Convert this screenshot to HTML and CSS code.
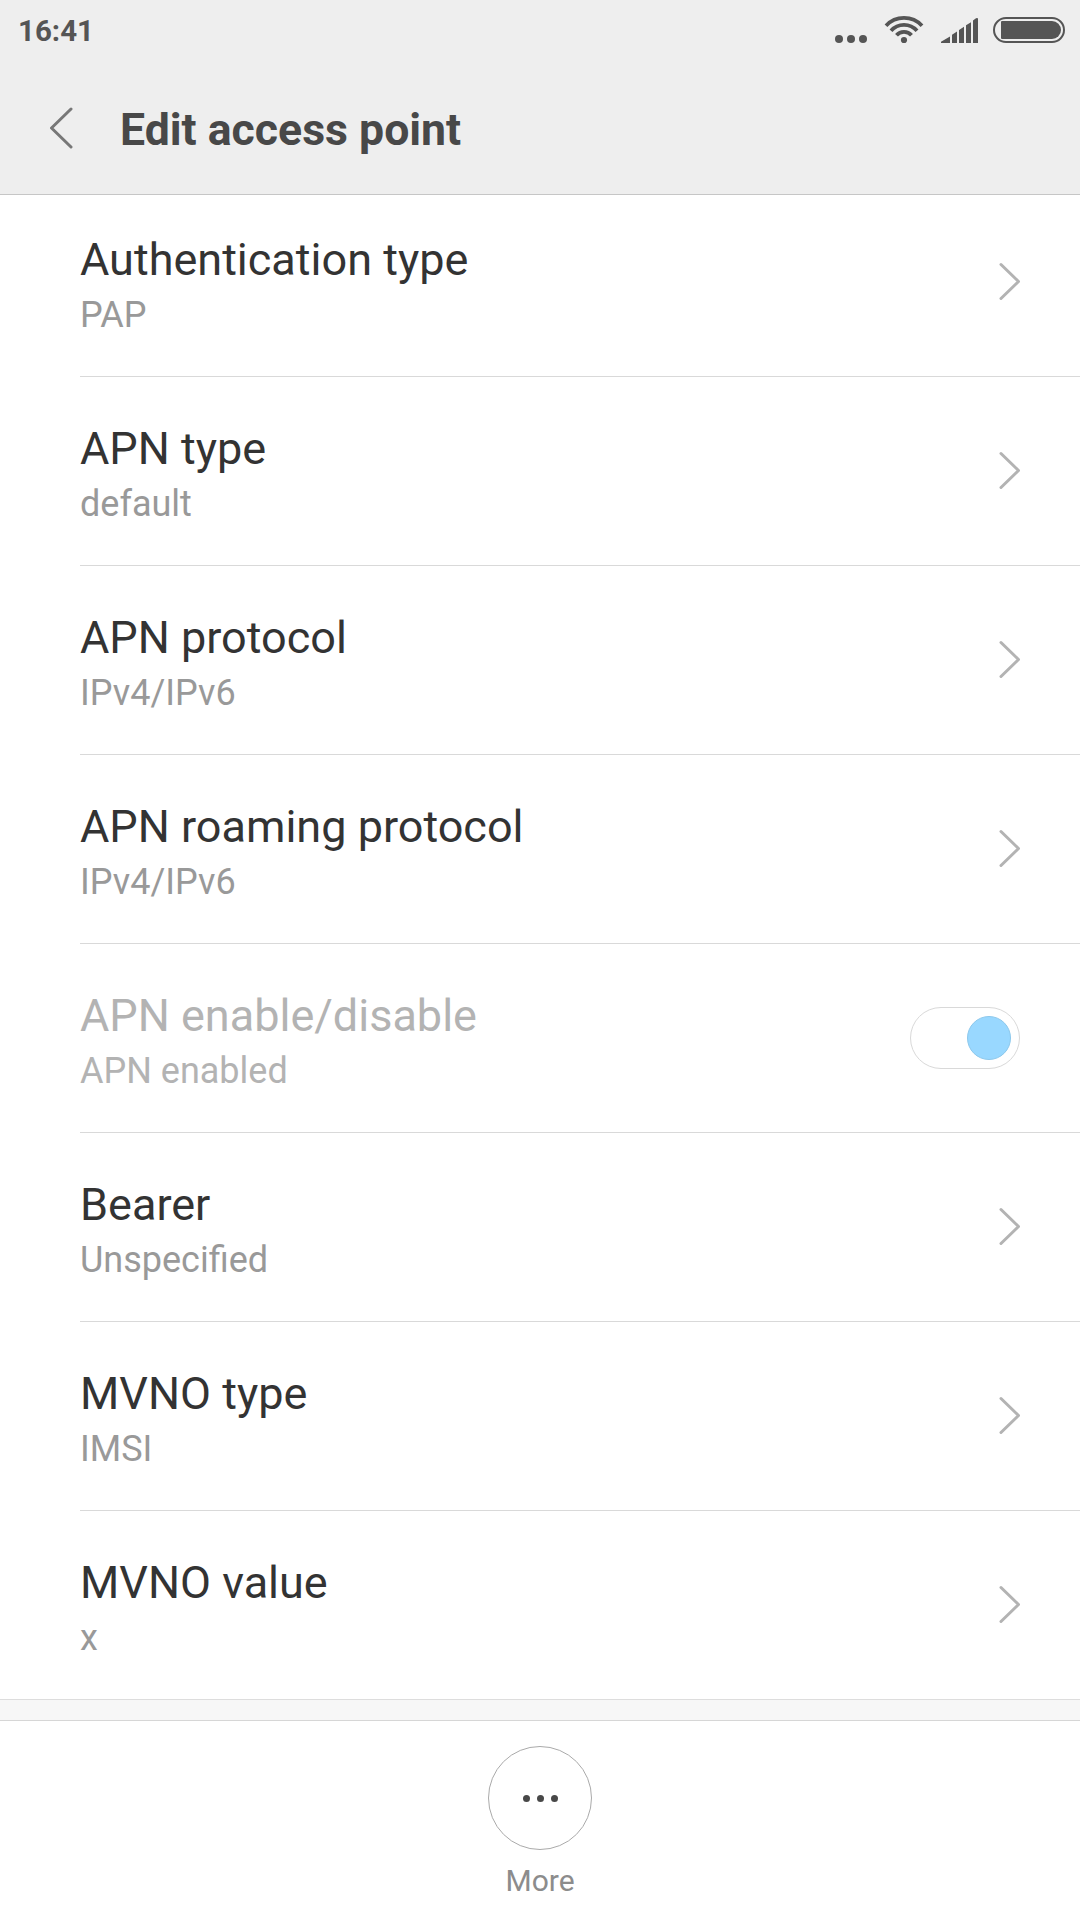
FILE: index.html
```
<!DOCTYPE html>
<html lang="en"><head><meta charset="utf-8"><title>Edit access point</title><link rel="stylesheet" href="styles.css"></head>
<body>
<header class="header">
<div class="status"><span class="time">16:41</span>
<svg class="status-icons" width="250" height="60" viewBox="830 0 250 60" fill="#555"><circle cx="839" cy="39" r="4"/><circle cx="851" cy="39" r="4"/><circle cx="863" cy="39" r="4"/><g fill="none" stroke="#555" stroke-width="3.8"><path d="M886 25.7A24.7 24.7 0 0 1 922 25.7M891 30.7A17.3 17.3 0 0 1 917 30.7M896.5 35.3A10 10 0 0 1 911.5 35.3"/></g><circle cx="904" cy="40" r="3.1"/><path d="M941 43V41.8L950 36.5V43ZM952 43V34.7L957 31.5V43ZM959 43V30L964 26.8V43ZM966 43V25.3L971 22.2V43ZM973 43V20.5L976 18.3Q978 17.5 978 19V43Z"/><rect x="994" y="18" width="70" height="24" rx="12" fill="none" stroke="#555" stroke-width="2"/><path d="M1002 21H1052A9 9 0 0 1 1052 39H1002Q1001 39 1001 38V22Q1001 21 1002 21Z"/></svg></div>
<div class="titlebar"><svg class="back" width="26" height="42" viewBox="0 0 26 42"><path d="M23 2L3.5 21L23 40"/></svg><h1>Edit access point</h1></div>
</header>
<main class="list">
<div class="row"><div class="text"><div class="name">Authentication type</div><div class="value">PAP</div></div><svg class="chev" width="24" height="40" viewBox="0 0 24 40"><path d="M5 2.5L22.5 19.5L5 36.5"/></svg></div>
<div class="row"><div class="text"><div class="name">APN type</div><div class="value">default</div></div><svg class="chev" width="24" height="40" viewBox="0 0 24 40"><path d="M5 2.5L22.5 19.5L5 36.5"/></svg></div>
<div class="row"><div class="text"><div class="name">APN protocol</div><div class="value">IPv4/IPv6</div></div><svg class="chev" width="24" height="40" viewBox="0 0 24 40"><path d="M5 2.5L22.5 19.5L5 36.5"/></svg></div>
<div class="row"><div class="text"><div class="name">APN roaming protocol</div><div class="value">IPv4/IPv6</div></div><svg class="chev" width="24" height="40" viewBox="0 0 24 40"><path d="M5 2.5L22.5 19.5L5 36.5"/></svg></div>
<div class="row disabled"><div class="text"><div class="name">APN enable/disable</div><div class="value">APN enabled</div></div><div class="switch"><div class="knob"></div></div></div>
<div class="row"><div class="text"><div class="name">Bearer</div><div class="value">Unspecified</div></div><svg class="chev" width="24" height="40" viewBox="0 0 24 40"><path d="M5 2.5L22.5 19.5L5 36.5"/></svg></div>
<div class="row"><div class="text"><div class="name">MVNO type</div><div class="value">IMSI</div></div><svg class="chev" width="24" height="40" viewBox="0 0 24 40"><path d="M5 2.5L22.5 19.5L5 36.5"/></svg></div>
<div class="row"><div class="text"><div class="name">MVNO value</div><div class="value">x</div></div><svg class="chev" width="24" height="40" viewBox="0 0 24 40"><path d="M5 2.5L22.5 19.5L5 36.5"/></svg></div>
</main>
<div class="gap"></div>
<footer class="footer"><div class="more"><i></i><i></i><i></i></div><div class="label">More</div></footer>
</body></html>
```
FILE: styles.css
```
*{box-sizing:border-box}
body{margin:0;width:1080px;height:1920px;overflow:hidden;background:#fff;font-family:Roboto,sans-serif;display:flex;flex-direction:column}
.header{height:195px;background:#eee;border-bottom:1px solid #c6c6c6}
.status{height:60px;display:flex;justify-content:space-between;align-items:center;padding-left:18px}
.time{padding-top:2px;font-size:29.5px;font-weight:700;color:#555}
.titlebar{height:134px;display:flex;align-items:center;padding:2px 0 0 48px;gap:46px}
.back{fill:none;stroke:#777;stroke-width:3;stroke-linecap:round;stroke-linejoin:round}
h1{margin:0;padding-top:4px;font-size:44.6px;font-weight:700;color:#484848}
.list{height:1504px;overflow:hidden;display:flex;flex-direction:column;justify-content:flex-end}
.row{flex:none;height:189px;margin-left:80px;padding-right:60px;display:flex;align-items:center;justify-content:space-between;border-bottom:1px solid #d9d9d9}
.row:last-child{height:188px;border-bottom:0}
.text{padding-top:6px}
.name{font-size:45px;line-height:60px;color:#333}
.value{font-size:36px;line-height:50px;color:#999}
.chev{fill:none;stroke:#b3b3b3;stroke-width:3;stroke-linecap:round;stroke-linejoin:round}
.disabled .name,.disabled .value{color:#b3b3b3}
.switch{width:110px;height:62px;border:1px solid #d9d9d9;border-radius:31px;display:flex;align-items:center;justify-content:flex-end;padding-right:8px}
.knob{width:44px;height:44px;border-radius:50%;background:#99d8ff;border:1px solid #8cc8ec}
.gap{height:22px;background:#f7f7f7;border-top:1px solid #ddd;border-bottom:1px solid #d6d6d6}
.footer{flex:1;display:flex;flex-direction:column;align-items:center;padding-top:25px}
.more{width:104px;height:104px;border:1px solid #aaa;border-radius:50%;display:flex;align-items:center;justify-content:center;gap:7px}
.more i{width:7px;height:7px;border-radius:50%;background:#484848}
.label{font-size:30px;line-height:40px;margin-top:11px;color:#8c8c8c}
```
